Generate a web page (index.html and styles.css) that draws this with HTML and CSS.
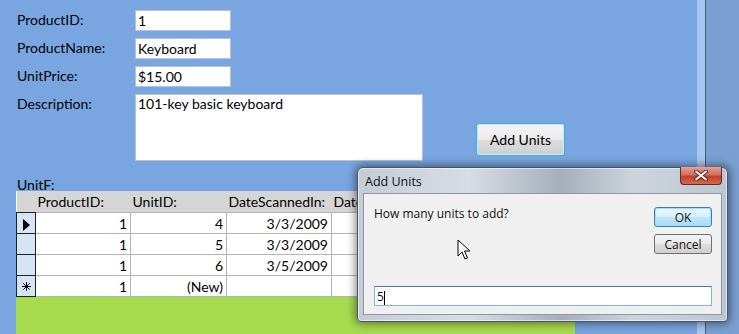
FILE: index.html
```html
<!DOCTYPE html>
<html lang="en">
<head>
    <meta charset="UTF-8">
    <title>Products - Add Units</title>
    <link rel="stylesheet" href="styles.css">
</head>
<body>

<div class="app">
    <main class="form-area">
        <div class="fields">
            <label class="lbl">ProductID:</label>
            <div class="box">1</div>
            <label class="lbl">ProductName:</label>
            <div class="box">Keyboard</div>
            <label class="lbl">UnitPrice:</label>
            <div class="box">$15.00</div>
            <label class="lbl">Description:</label>
            <div class="desc-row">
                <div class="box memo">101-key basic keyboard</div>
                <button class="add-btn">Add Units</button>
            </div>
        </div>

        <div class="sub-label">UnitF:</div>
        <table class="datasheet">
            <thead>
                <tr>
                    <th class="sel-head"></th>
                    <th class="c1">ProductID:</th>
                    <th class="c2">UnitID:</th>
                    <th class="c3">DateScannedIn:</th>
                    <th>Date</th>
                </tr>
            </thead>
            <tbody>
                <tr>
                    <td class="sel"><span class="arrow"></span></td>
                    <td>1</td><td>4</td><td>3/3/2009</td><td></td>
                </tr>
                <tr>
                    <td class="sel"></td>
                    <td>1</td><td>5</td><td>3/3/2009</td><td></td>
                </tr>
                <tr>
                    <td class="sel"></td>
                    <td>1</td><td>6</td><td>3/5/2009</td><td></td>
                </tr>
                <tr>
                    <td class="sel">
                        <svg class="star" width="9" height="9" viewBox="0 0 9 9">
                            <path d="M4.5 0 V9 M0 4.5 H9 M1.3 1.3 L7.7 7.7 M7.7 1.3 L1.3 7.7" stroke="#000" stroke-width="1"/>
                        </svg>
                    </td>
                    <td>1</td><td>(New)</td><td></td><td></td>
                </tr>
            </tbody>
        </table>
        <div class="green"></div>
    </main>
    <div class="strip"></div>
    <div class="edge"></div>
    <div class="rest"></div>
</div>

<div class="dialog">
    <div class="titlebar">
        <span class="title">Add Units</span>
        <span class="close">
            <svg width="14" height="11" viewBox="0 0 14 11">
                <path d="M2 1.5 L12 9.5 M12 1.5 L2 9.5" stroke="#5a2a22" stroke-width="4" stroke-linecap="round"/>
                <path d="M2 1.5 L12 9.5 M12 1.5 L2 9.5" stroke="#fff" stroke-width="2" stroke-linecap="round"/>
            </svg>
        </span>
    </div>
    <div class="client">
        <div class="prompt-row">
            <p class="prompt">How many units to add?</p>
            <div class="dlg-buttons">
                <button class="dlg-btn default">OK</button>
                <button class="dlg-btn">Cancel</button>
            </div>
        </div>
        <div class="answer">5<span class="caret"></span></div>
    </div>
</div>

<svg class="pointer" width="14" height="22" viewBox="0 0 14 22">
    <path d="M1 1 L1 17 L5 13 L8 20 L10.5 19 L7.5 12 L13 12 Z" fill="#fff" stroke="#000" stroke-width="1" stroke-linejoin="round"/>
</svg>

</body>
</html>
```

FILE: styles.css
```css
body {
    margin: 0;
    padding: 0;
    font-family: Lato, "Open Sans", sans-serif;
    font-size: 14px;
    color: #000;
    background: #7aa0d2;
    overflow: hidden;
}
.app {
    display: flex;
    height: 334px;
}
.form-area {
    width: 697px;
    background: #79a6e0;
    padding-top: 10px;
    box-sizing: border-box;
}
.strip {
    width: 8px;
    background: #a9c7ee;
}
.edge {
    width: 1px;
    background: #3f5f86;
}
.rest {
    flex: 1;
    background: #7aa0d2;
}
.fields {
    display: grid;
    grid-template-columns: 118px auto;
    row-gap: 7px;
    padding-left: 17px;
    align-items: start;
}
.lbl {
    line-height: 19px;
}
.box {
    width: 92px;
    height: 19px;
    line-height: 19px;
    padding-left: 2px;
    background: #fff;
    border: 1px solid #b8c4d4;
}
.desc-row {
    display: flex;
    align-items: flex-end;
}
.box.memo {
    width: 284px;
    height: 65px;
    line-height: 18px;
}
.add-btn {
    margin-left: 53px;
    margin-bottom: 5px;
    width: 89px;
    height: 33px;
    font-family: Lato, "Open Sans", sans-serif;
    font-size: 14px;
    color: #000;
    border: 1px solid #3cb0d8;
    border-radius: 3px;
    background: linear-gradient(#f4f4f4 0%, #ebebeb 50%, #dcdcdc 51%, #cfcfcf 100%);
    box-shadow: inset 0 0 0 1px #c6eaf6;
}
.sub-label {
    margin-top: 17px;
    padding-left: 17px;
    line-height: 13px;
}
.datasheet {
    margin-left: 16px;
    width: 559px;
    border-collapse: collapse;
    background: #fff;
    table-layout: fixed;
}
.datasheet th {
    background: #d5d5d5;
    font-weight: normal;
    text-align: left;
    padding: 0 0 0 2px;
    height: 21px;
    white-space: nowrap;
}
.datasheet .sel-head {
    width: 17px;
}
.datasheet .c1 { width: 93px; }
.datasheet .c2 { width: 94px; }
.datasheet .c3 { width: 103px; }
.datasheet td {
    height: 20px;
    padding: 0 3px 0 0;
    text-align: right;
    border: 1px solid #b4b4b4;
}
.datasheet td.sel {
    background: #d6e5f6;
    border: 1px solid #202020;
    text-align: center;
    padding: 0;
}
.arrow {
    display: inline-block;
    width: 0;
    height: 0;
    border-top: 6px solid transparent;
    border-bottom: 6px solid transparent;
    border-left: 7px solid #000;
    vertical-align: middle;
}
.star {
    display: block;
    margin: 0 auto;
}
.green {
    margin-left: 16px;
    width: 559px;
    height: 40px;
    background: #a7db4f;
}
.dialog {
    position: absolute;
    left: 357px;
    top: 167px;
    width: 371px;
    height: 155px;
    box-sizing: border-box;
    border: 1px solid #4a5563;
    border-radius: 6px 6px 4px 4px;
    background: linear-gradient(90deg, #c3ccd6 0%, #d7dde4 30%, #a5aebb 55%, #cdd4dc 75%, #bcc6d2 100%);
    box-shadow: 0 0 8px 2px rgba(0, 0, 0, 0.45), inset 0 0 0 1px rgba(255, 255, 255, 0.55);
    padding: 0 5px 6px 5px;
    display: flex;
    flex-direction: column;
    font-family: "Open Sans", sans-serif;
    font-size: 12px;
}
.titlebar {
    height: 25px;
    display: flex;
    align-items: center;
    justify-content: space-between;
    position: relative;
}
.title {
    padding-left: 2px;
    padding-top: 1px;
    font-size: 12.5px;
    color: #111;
}
.close {
    position: absolute;
    right: 0;
    top: -1px;
    width: 42px;
    height: 18px;
    border: 1px solid #6a2a22;
    border-top: none;
    border-radius: 0 0 4px 4px;
    background: linear-gradient(#e8a091 0%, #d4705d 45%, #c0402c 55%, #d36a4e 100%);
    display: flex;
    align-items: center;
    justify-content: center;
    box-sizing: border-box;
}
.client {
    flex: 1;
    background: #f0f0f0;
    border: 1px solid #8d96a2;
    padding: 0 9px 0 10px;
    display: flex;
    flex-direction: column;
}
.prompt-row {
    display: flex;
    justify-content: space-between;
    flex: 1;
}
.prompt {
    margin: 11px 0 0 0;
    color: #111;
}
.dlg-buttons {
    display: flex;
    flex-direction: column;
    gap: 7px;
    padding-top: 13px;
}
.dlg-btn {
    width: 58px;
    height: 20px;
    padding: 0;
    font-family: "Open Sans", sans-serif;
    font-size: 12px;
    color: #111;
    border: 1px solid #707070;
    border-radius: 3px;
    background: linear-gradient(#f2f2f2 0%, #ebebeb 50%, #dddddd 51%, #cfcfcf 100%);
}
.dlg-btn.default {
    border-color: #3c7fb1;
    background: linear-gradient(#eaf6fd 0%, #d9f0fc 50%, #bee6fd 51%, #a7d9f5 100%);
    box-shadow: inset 0 0 0 1px #9fe0f8;
}
.answer {
    margin-bottom: 8px;
    height: 20px;
    line-height: 20px;
    background: #fff;
    border: 1px solid #7eb4ea;
    border-top-color: #3d7bad;
    padding-left: 2px;
    box-sizing: border-box;
    color: #111;
}
.caret {
    display: inline-block;
    width: 1px;
    height: 14px;
    background: #000;
    vertical-align: middle;
}
.pointer {
    position: absolute;
    left: 457px;
    top: 239px;
}
```
